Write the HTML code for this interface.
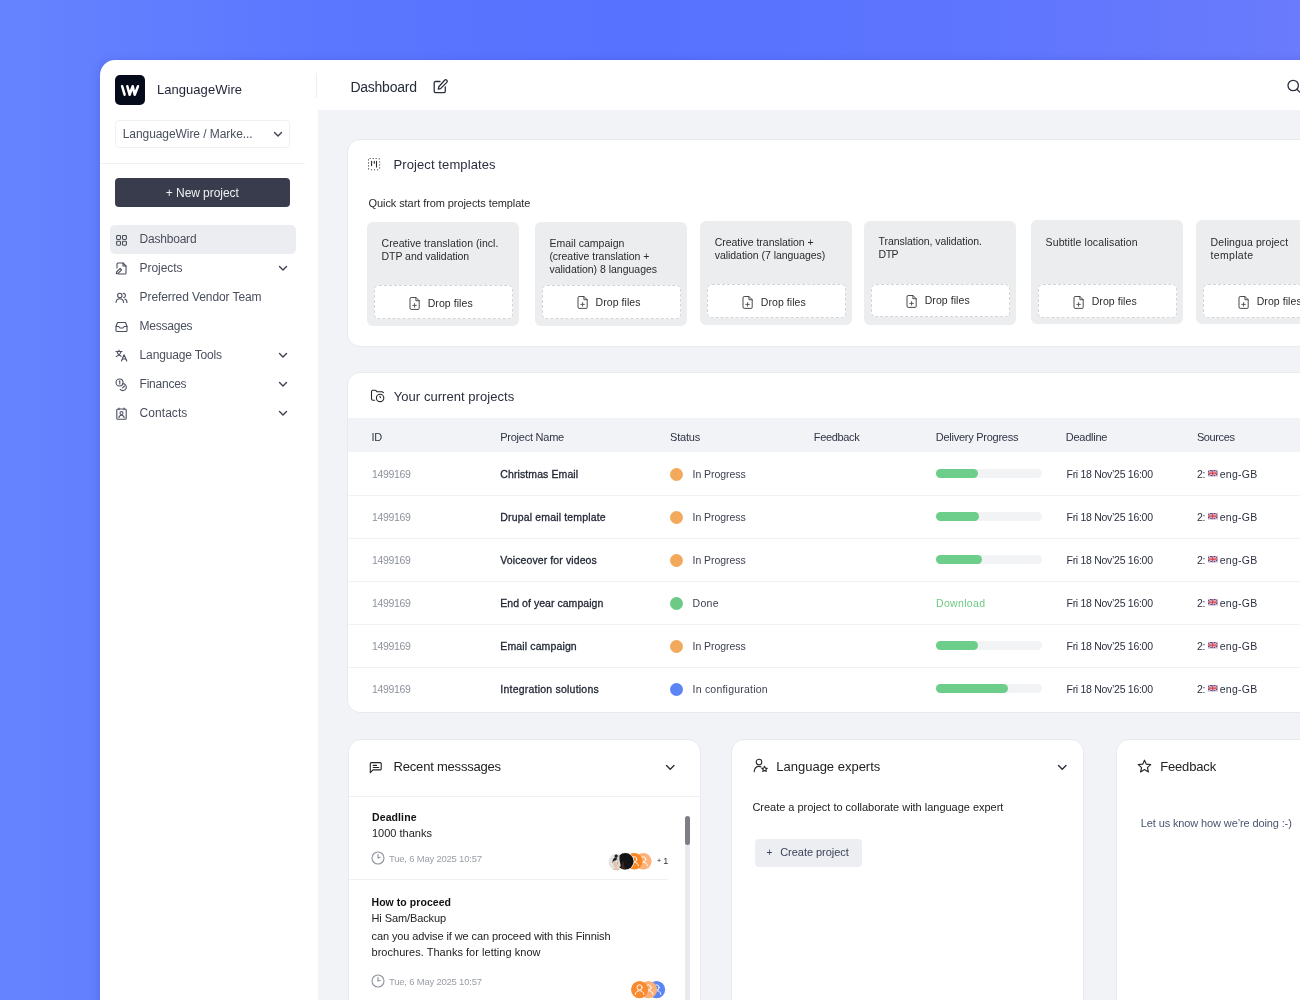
<!DOCTYPE html>
<html><head><meta charset="utf-8"><title>Dashboard</title>
<style>
html,body{margin:0;padding:0;width:1300px;height:1000px;overflow:hidden;}
body{position:relative;font-family:"Liberation Sans", sans-serif;background:linear-gradient(90deg,#6683ff 0%,#5b77ff 25%,#5672ff 48%,#5e75fe 75%,#6a7bfc 100%);}
.t{position:absolute;white-space:pre;}
#txt{position:absolute;left:0;top:0;width:1300px;height:1000px;will-change:transform;}
svg{position:absolute;overflow:visible;}
</style></head><body>
<div style="position:absolute;left:100px;top:60px;width:1250px;height:1000px;background:#fff;border-top-left-radius:15px;box-shadow:-2px 0 8px rgba(30,40,140,0.16);"></div>
<div style="position:absolute;left:318px;top:110px;width:1000px;height:900px;background:#f2f3f6;"></div>
<div style="position:absolute;left:316px;top:73px;width:1px;height:25px;background:#eceef1;"></div>
<div style="position:absolute;left:115px;top:75px;width:30px;height:30px;background:#060b1c;border-radius:5px;"></div>
<svg style="left:117px;top:80px" width="26" height="20" viewBox="0 0 26 20"><g fill="none" stroke="#fff" stroke-width="2.5" stroke-linecap="round" stroke-linejoin="round"><path d="M5.1 6.2 L7.6 14.7"/><path d="M10.3 6.2 L12.6 14.7 L15.7 6.2 L17.7 14.7 L21 6.2"/></g></svg>
<div style="position:absolute;left:115px;top:120px;width:175px;height:28px;box-sizing:border-box;border:1px solid #eff0f3;border-radius:4px;"></div>
<svg style="left:274.0px;top:132.3px" width="8" height="4.4" viewBox="0 0 8 4.4"><path d="M0.5 0.5 L4.0 3.9000000000000004 L7.5 0.5" fill="none" stroke="#3a3f4e" stroke-width="1.4" stroke-linecap="round" stroke-linejoin="round"/></svg>
<div style="position:absolute;left:100px;top:163px;width:205px;height:1px;background:#f0f1f3;"></div>
<div style="position:absolute;left:115px;top:178px;width:175px;height:29px;background:#393c4c;border-radius:4px;"></div>
<div style="position:absolute;left:110px;top:225px;width:186px;height:29px;background:#ecedf0;border-radius:5px;"></div>
<svg style="left:279.0px;top:266.0px" width="8" height="4.4" viewBox="0 0 8 4.4"><path d="M0.5 0.5 L4.0 3.9000000000000004 L7.5 0.5" fill="none" stroke="#3a3f4e" stroke-width="1.4" stroke-linecap="round" stroke-linejoin="round"/></svg>
<svg style="left:279.0px;top:353.0px" width="8" height="4.4" viewBox="0 0 8 4.4"><path d="M0.5 0.5 L4.0 3.9000000000000004 L7.5 0.5" fill="none" stroke="#3a3f4e" stroke-width="1.4" stroke-linecap="round" stroke-linejoin="round"/></svg>
<svg style="left:279.0px;top:382.0px" width="8" height="4.4" viewBox="0 0 8 4.4"><path d="M0.5 0.5 L4.0 3.9000000000000004 L7.5 0.5" fill="none" stroke="#3a3f4e" stroke-width="1.4" stroke-linecap="round" stroke-linejoin="round"/></svg>
<svg style="left:279.0px;top:411.0px" width="8" height="4.4" viewBox="0 0 8 4.4"><path d="M0.5 0.5 L4.0 3.9000000000000004 L7.5 0.5" fill="none" stroke="#3a3f4e" stroke-width="1.4" stroke-linecap="round" stroke-linejoin="round"/></svg>
<svg style="left:115px;top:233.5px" width="13" height="13" viewBox="0 0 13 13"><g fill="none" stroke="#4a4f5e" stroke-width="1.1" stroke-linecap="round" stroke-linejoin="round"><rect x="1.6" y="1.55" width="3.9" height="3.9" rx="0.9"/><rect x="7.5" y="1.55" width="3.9" height="3.9" rx="0.9"/><rect x="1.6" y="7.3" width="3.9" height="3.9" rx="0.9"/><rect x="7.5" y="7.3" width="3.9" height="3.9" rx="0.9"/></g></svg>
<svg style="left:115px;top:262px" width="13" height="13" viewBox="0 0 13 13"><g fill="none" stroke="#4a4f5e" stroke-width="1.1" stroke-linecap="round" stroke-linejoin="round"><path d="M3.5 12 H10 a1 1 0 0 0 1-1 V4 L8 1 H3 a1 1 0 0 0 -1 1 V6"/><path d="M8 1 V4 H11"/><path d="M1.3 11.8 L1.6 10 L5.2 6.4 L6.6 7.8 L3 11.4 Z"/></g></svg>
<svg style="left:115px;top:291px" width="13" height="13" viewBox="0 0 13 13"><g fill="none" stroke="#4a4f5e" stroke-width="1.1" stroke-linecap="round" stroke-linejoin="round"><circle cx="4.8" cy="4.5" r="2.2"/><path d="M1 11.5 C1.3 8.8 2.8 7.8 4.8 7.8 C6.8 7.8 8.3 8.8 8.6 11.5"/><path d="M8.3 2.4 C9.8 2.6 10.6 3.5 10.4 4.8 C10.2 5.8 9.4 6.4 8.6 6.5"/><path d="M9.8 8 C11.2 8.4 11.9 9.6 12 11.5"/></g></svg>
<svg style="left:115px;top:320px" width="13" height="13" viewBox="0 0 13 13"><g fill="none" stroke="#4a4f5e" stroke-width="1.1" stroke-linecap="round" stroke-linejoin="round"><path d="M1 6.5 L2.5 2.5 H10.5 L12 6.5 V10.5 a1 1 0 0 1 -1 1 H2 a1 1 0 0 1 -1 -1 Z"/><path d="M1 6.5 H3.8 L5 8 H8 L9.2 6.5 H12"/></g></svg>
<svg style="left:115px;top:349px" width="13" height="13" viewBox="0 0 13 13"><g fill="none" stroke="#4a4f5e" stroke-width="1.1" stroke-linecap="round" stroke-linejoin="round"><path d="M1 2.5 H7"/><path d="M4 1 V2.5"/><path d="M2 2.5 C2.5 5 4 6.5 6.2 7.3"/><path d="M6 2.5 C5.5 4.8 4 6.5 1.2 7.6"/><path d="M6.5 12 L9 5.8 L11.8 12"/><path d="M7.4 10 H10.9"/></g></svg>
<svg style="left:115px;top:378px" width="13" height="13" viewBox="0 0 13 13"><g fill="none" stroke="#4a4f5e" stroke-width="1.1" stroke-linecap="round" stroke-linejoin="round"><circle cx="4.5" cy="4.5" r="3.5"/><path d="M4.2 3.3 L4.8 3 V6"/><path d="M7.8 5.6 a3.5 3.5 0 1 1 -2.6 5.8"/><path d="M7.5 9.8 L9.5 8"/></g></svg>
<svg style="left:115px;top:407px" width="13" height="13" viewBox="0 0 13 13"><g fill="none" stroke="#4a4f5e" stroke-width="1.1" stroke-linecap="round" stroke-linejoin="round"><rect x="1.8" y="2" width="9.4" height="10.2" rx="1"/><path d="M4 1 V2.8 M9 1 V2.8"/><circle cx="6.5" cy="6" r="1.5"/><path d="M3.9 10.6 C4.2 8.9 5.2 8.3 6.5 8.3 C7.8 8.3 8.8 8.9 9.1 10.6"/></g></svg>
<svg style="left:433px;top:79px" width="15" height="15" viewBox="0 0 15 15"><g fill="none" stroke="#2a2f3e" stroke-width="1.3" stroke-linecap="round" stroke-linejoin="round"><path d="M7 2.5 H2.5 a1.3 1.3 0 0 0 -1.3 1.3 V12.3 a1.3 1.3 0 0 0 1.3 1.3 H11 a1.3 1.3 0 0 0 1.3 -1.3 V8"/><path d="M11.6 1.2 a1.5 1.5 0 0 1 2.2 2.2 L7.6 9.6 L5.3 10.1 L5.8 7.8 Z"/></g></svg>
<svg style="left:1286px;top:79px" width="20" height="20" viewBox="0 0 20 20"><g fill="none" stroke="#2a2f3e" stroke-width="1.3" stroke-linecap="round"><circle cx="7.2" cy="6.5" r="5.2"/><path d="M11 10.3 L14 13.3"/></g></svg>
<div style="position:absolute;left:347px;top:139px;width:1000px;height:208px;box-sizing:border-box;background:#fff;border:1px solid #e9eaee;border-radius:13px;"></div>
<svg style="left:366px;top:156px" width="16" height="16" viewBox="0 0 16 16"><g fill="none" stroke="#2b2b2b" stroke-width="1.1" stroke-linecap="round"><rect x="2.5" y="2.5" width="11.2" height="11.2" rx="1.6" stroke-dasharray="0.1 2.9"/><path d="M5.6 5.2 V9.6 M8.3 5.2 V7.2 M10.5 5.2 V10.9"/></g></svg>
<div style="position:absolute;left:367.2px;top:221.8px;width:152px;height:104px;background:#ecedef;border-radius:6px;"></div>
<div style="position:absolute;left:374.2px;top:285.4px;width:138.5px;height:33.60000000000002px;box-sizing:border-box;background:#fff;border:1px dashed #d3d5da;border-radius:5px;"></div>
<svg style="left:408.7px;top:295.7px" width="12" height="14" viewBox="0 0 12 14"><g fill="none" stroke="#4a4a4a" stroke-width="1" stroke-linejoin="round" stroke-linecap="round"><path d="M1 2.6 a1.1 1.1 0 0 1 1.1 -1.1 H7 L10.2 4.7 V12.3 a1.1 1.1 0 0 1 -1.1 1.1 H2.1 a1.1 1.1 0 0 1 -1.1 -1.1 Z"/><path d="M6.9 1.5 V4.7 H10.2"/><path d="M5.6 7.6 V11.2 M3.8 9.4 H7.4" stroke-width="0.9"/></g></svg>
<div style="position:absolute;left:535.0px;top:222.1px;width:152px;height:104px;background:#ecedef;border-radius:6px;"></div>
<div style="position:absolute;left:542.0px;top:285.1px;width:138.5px;height:33.5px;box-sizing:border-box;background:#fff;border:1px dashed #d3d5da;border-radius:5px;"></div>
<svg style="left:576.5px;top:295.35px" width="12" height="14" viewBox="0 0 12 14"><g fill="none" stroke="#4a4a4a" stroke-width="1" stroke-linejoin="round" stroke-linecap="round"><path d="M1 2.6 a1.1 1.1 0 0 1 1.1 -1.1 H7 L10.2 4.7 V12.3 a1.1 1.1 0 0 1 -1.1 1.1 H2.1 a1.1 1.1 0 0 1 -1.1 -1.1 Z"/><path d="M6.9 1.5 V4.7 H10.2"/><path d="M5.6 7.6 V11.2 M3.8 9.4 H7.4" stroke-width="0.9"/></g></svg>
<div style="position:absolute;left:700.3px;top:221.0px;width:152px;height:104px;background:#ecedef;border-radius:6px;"></div>
<div style="position:absolute;left:707.3px;top:284.3px;width:138.5px;height:33.69999999999999px;box-sizing:border-box;background:#fff;border:1px dashed #d3d5da;border-radius:5px;"></div>
<svg style="left:741.8px;top:294.65px" width="12" height="14" viewBox="0 0 12 14"><g fill="none" stroke="#4a4a4a" stroke-width="1" stroke-linejoin="round" stroke-linecap="round"><path d="M1 2.6 a1.1 1.1 0 0 1 1.1 -1.1 H7 L10.2 4.7 V12.3 a1.1 1.1 0 0 1 -1.1 1.1 H2.1 a1.1 1.1 0 0 1 -1.1 -1.1 Z"/><path d="M6.9 1.5 V4.7 H10.2"/><path d="M5.6 7.6 V11.2 M3.8 9.4 H7.4" stroke-width="0.9"/></g></svg>
<div style="position:absolute;left:864.2px;top:221.0px;width:152px;height:104px;background:#ecedef;border-radius:6px;"></div>
<div style="position:absolute;left:871.2px;top:283.5px;width:138.5px;height:33.10000000000002px;box-sizing:border-box;background:#fff;border:1px dashed #d3d5da;border-radius:5px;"></div>
<svg style="left:905.7px;top:293.55px" width="12" height="14" viewBox="0 0 12 14"><g fill="none" stroke="#4a4a4a" stroke-width="1" stroke-linejoin="round" stroke-linecap="round"><path d="M1 2.6 a1.1 1.1 0 0 1 1.1 -1.1 H7 L10.2 4.7 V12.3 a1.1 1.1 0 0 1 -1.1 1.1 H2.1 a1.1 1.1 0 0 1 -1.1 -1.1 Z"/><path d="M6.9 1.5 V4.7 H10.2"/><path d="M5.6 7.6 V11.2 M3.8 9.4 H7.4" stroke-width="0.9"/></g></svg>
<div style="position:absolute;left:1031.2px;top:220.3px;width:152px;height:104px;background:#ecedef;border-radius:6px;"></div>
<div style="position:absolute;left:1038.2px;top:284.3px;width:138.5px;height:33.39999999999998px;box-sizing:border-box;background:#fff;border:1px dashed #d3d5da;border-radius:5px;"></div>
<svg style="left:1072.7px;top:294.5px" width="12" height="14" viewBox="0 0 12 14"><g fill="none" stroke="#4a4a4a" stroke-width="1" stroke-linejoin="round" stroke-linecap="round"><path d="M1 2.6 a1.1 1.1 0 0 1 1.1 -1.1 H7 L10.2 4.7 V12.3 a1.1 1.1 0 0 1 -1.1 1.1 H2.1 a1.1 1.1 0 0 1 -1.1 -1.1 Z"/><path d="M6.9 1.5 V4.7 H10.2"/><path d="M5.6 7.6 V11.2 M3.8 9.4 H7.4" stroke-width="0.9"/></g></svg>
<div style="position:absolute;left:1196.2px;top:220.3px;width:152px;height:104px;background:#ecedef;border-radius:6px;"></div>
<div style="position:absolute;left:1203.2px;top:284.3px;width:138.5px;height:33.39999999999998px;box-sizing:border-box;background:#fff;border:1px dashed #d3d5da;border-radius:5px;"></div>
<svg style="left:1237.7px;top:294.5px" width="12" height="14" viewBox="0 0 12 14"><g fill="none" stroke="#4a4a4a" stroke-width="1" stroke-linejoin="round" stroke-linecap="round"><path d="M1 2.6 a1.1 1.1 0 0 1 1.1 -1.1 H7 L10.2 4.7 V12.3 a1.1 1.1 0 0 1 -1.1 1.1 H2.1 a1.1 1.1 0 0 1 -1.1 -1.1 Z"/><path d="M6.9 1.5 V4.7 H10.2"/><path d="M5.6 7.6 V11.2 M3.8 9.4 H7.4" stroke-width="0.9"/></g></svg>
<div style="position:absolute;left:347px;top:372px;width:1000px;height:341px;box-sizing:border-box;background:#fff;border:1px solid #e9eaee;border-radius:13px;"></div>
<svg style="left:366px;top:385px" width="24" height="22" viewBox="0 0 24 22"><g fill="none" stroke="#262626" stroke-width="1.1" stroke-linecap="round" stroke-linejoin="round"><path d="M8.6 15.2 H7 a1.5 1.5 0 0 1 -1.5 -1.5 V6.8 a1.5 1.5 0 0 1 1.5 -1.5 H9.2 a1 1 0 0 1 0.8 0.4 L10.8 6.7 H16.2 L17.4 7.6"/><circle cx="14.1" cy="12.9" r="3.7"/><path d="M13.9 11.3 L14.4 12.6"/></g></svg>
<div style="position:absolute;left:348px;top:418px;width:1000px;height:34px;background:#f2f3f6;"></div>
<div style="position:absolute;left:670px;top:468.0px;width:13px;height:13px;background:#f2a95c;border-radius:50%;"></div>
<div style="position:absolute;left:935.7px;top:469.0px;width:106.6px;height:8.7px;background:#f2f3f5;border-radius:5px;"></div>
<div style="position:absolute;left:935.7px;top:469.0px;width:42.3px;height:8.7px;background:#6dcd8a;border-radius:5px;"></div>
<svg style="left:1207.7px;top:469.8px" width="9.5" height="6.2" viewBox="0 0 60 40"><rect width="60" height="40" fill="#283a8e"/><path d="M0 0 L60 40 M60 0 L0 40" stroke="#fff" stroke-width="8"/><path d="M0 0 L60 40 M60 0 L0 40" stroke="#d22f3c" stroke-width="3"/><path d="M30 0 V40 M0 20 H60" stroke="#fff" stroke-width="12"/><path d="M30 0 V40 M0 20 H60" stroke="#d22f3c" stroke-width="7"/></svg>
<div style="position:absolute;left:348px;top:494.5px;width:1000px;height:1px;background:#f0f1f3;"></div>
<div style="position:absolute;left:670px;top:511.00000000000006px;width:13px;height:13px;background:#f2a95c;border-radius:50%;"></div>
<div style="position:absolute;left:935.7px;top:512.0px;width:106.6px;height:8.7px;background:#f2f3f5;border-radius:5px;"></div>
<div style="position:absolute;left:935.7px;top:512.0px;width:43.5px;height:8.7px;background:#6dcd8a;border-radius:5px;"></div>
<svg style="left:1207.7px;top:512.8000000000001px" width="9.5" height="6.2" viewBox="0 0 60 40"><rect width="60" height="40" fill="#283a8e"/><path d="M0 0 L60 40 M60 0 L0 40" stroke="#fff" stroke-width="8"/><path d="M0 0 L60 40 M60 0 L0 40" stroke="#d22f3c" stroke-width="3"/><path d="M30 0 V40 M0 20 H60" stroke="#fff" stroke-width="12"/><path d="M30 0 V40 M0 20 H60" stroke="#d22f3c" stroke-width="7"/></svg>
<div style="position:absolute;left:348px;top:537.5px;width:1000px;height:1px;background:#f0f1f3;"></div>
<div style="position:absolute;left:670px;top:554.0px;width:13px;height:13px;background:#f2a95c;border-radius:50%;"></div>
<div style="position:absolute;left:935.7px;top:555.0px;width:106.6px;height:8.7px;background:#f2f3f5;border-radius:5px;"></div>
<div style="position:absolute;left:935.7px;top:555.0px;width:46px;height:8.7px;background:#6dcd8a;border-radius:5px;"></div>
<svg style="left:1207.7px;top:555.8000000000001px" width="9.5" height="6.2" viewBox="0 0 60 40"><rect width="60" height="40" fill="#283a8e"/><path d="M0 0 L60 40 M60 0 L0 40" stroke="#fff" stroke-width="8"/><path d="M0 0 L60 40 M60 0 L0 40" stroke="#d22f3c" stroke-width="3"/><path d="M30 0 V40 M0 20 H60" stroke="#fff" stroke-width="12"/><path d="M30 0 V40 M0 20 H60" stroke="#d22f3c" stroke-width="7"/></svg>
<div style="position:absolute;left:348px;top:580.5px;width:1000px;height:1px;background:#f0f1f3;"></div>
<div style="position:absolute;left:670px;top:597.0px;width:13px;height:13px;background:#6cca85;border-radius:50%;"></div>
<svg style="left:1207.7px;top:598.8000000000001px" width="9.5" height="6.2" viewBox="0 0 60 40"><rect width="60" height="40" fill="#283a8e"/><path d="M0 0 L60 40 M60 0 L0 40" stroke="#fff" stroke-width="8"/><path d="M0 0 L60 40 M60 0 L0 40" stroke="#d22f3c" stroke-width="3"/><path d="M30 0 V40 M0 20 H60" stroke="#fff" stroke-width="12"/><path d="M30 0 V40 M0 20 H60" stroke="#d22f3c" stroke-width="7"/></svg>
<div style="position:absolute;left:348px;top:623.5px;width:1000px;height:1px;background:#f0f1f3;"></div>
<div style="position:absolute;left:670px;top:640.0px;width:13px;height:13px;background:#f2a95c;border-radius:50%;"></div>
<div style="position:absolute;left:935.7px;top:641.0px;width:106.6px;height:8.7px;background:#f2f3f5;border-radius:5px;"></div>
<div style="position:absolute;left:935.7px;top:641.0px;width:42.3px;height:8.7px;background:#6dcd8a;border-radius:5px;"></div>
<svg style="left:1207.7px;top:641.8000000000001px" width="9.5" height="6.2" viewBox="0 0 60 40"><rect width="60" height="40" fill="#283a8e"/><path d="M0 0 L60 40 M60 0 L0 40" stroke="#fff" stroke-width="8"/><path d="M0 0 L60 40 M60 0 L0 40" stroke="#d22f3c" stroke-width="3"/><path d="M30 0 V40 M0 20 H60" stroke="#fff" stroke-width="12"/><path d="M30 0 V40 M0 20 H60" stroke="#d22f3c" stroke-width="7"/></svg>
<div style="position:absolute;left:348px;top:666.5px;width:1000px;height:1px;background:#f0f1f3;"></div>
<div style="position:absolute;left:670px;top:683.0px;width:13px;height:13px;background:#5b84f5;border-radius:50%;"></div>
<div style="position:absolute;left:935.7px;top:684.0px;width:106.6px;height:8.7px;background:#f2f3f5;border-radius:5px;"></div>
<div style="position:absolute;left:935.7px;top:684.0px;width:72px;height:8.7px;background:#6dcd8a;border-radius:5px;"></div>
<svg style="left:1207.7px;top:684.8000000000001px" width="9.5" height="6.2" viewBox="0 0 60 40"><rect width="60" height="40" fill="#283a8e"/><path d="M0 0 L60 40 M60 0 L0 40" stroke="#fff" stroke-width="8"/><path d="M0 0 L60 40 M60 0 L0 40" stroke="#d22f3c" stroke-width="3"/><path d="M30 0 V40 M0 20 H60" stroke="#fff" stroke-width="12"/><path d="M30 0 V40 M0 20 H60" stroke="#d22f3c" stroke-width="7"/></svg>
<div style="position:absolute;left:348px;top:739px;width:353px;height:300px;box-sizing:border-box;background:#fff;border:1px solid #e9eaee;border-radius:13px;"></div>
<svg style="left:368.5px;top:761px" width="14" height="13" viewBox="0 0 14 13"><g fill="none" stroke="#222" stroke-width="1.1" stroke-linecap="round" stroke-linejoin="round"><path d="M1.3 11.6 V2.6 a1 1 0 0 1 1 -1 H11.3 a0.9 0.9 0 0 1 0.9 0.9 V8 a0.9 0.9 0 0 1 -0.9 0.9 H4 Z"/><path d="M4.2 4.4 H7.5 M4.2 6.5 H9.8"/></g></svg>
<svg style="left:665.75px;top:765.1625px" width="8.5" height="4.675000000000001" viewBox="0 0 8.5 4.675000000000001"><path d="M0.5 0.5 L4.25 4.175000000000001 L8.0 0.5" fill="none" stroke="#2a2f3e" stroke-width="1.4" stroke-linecap="round" stroke-linejoin="round"/></svg>
<div style="position:absolute;left:349px;top:796px;width:352px;height:1px;background:#eff0f2;"></div>
<div style="position:absolute;left:685px;top:816px;width:4.6px;height:200px;background:#e9eaed;border-radius:3px;"></div>
<div style="position:absolute;left:685px;top:816px;width:4.6px;height:29px;background:#7d7f84;border-radius:3px;"></div>
<svg style="left:370.6px;top:851.4px" width="14" height="14" viewBox="0 0 14 14"><g fill="none" stroke="#8e939d" stroke-width="1.1" stroke-linecap="round"><circle cx="7" cy="7" r="6"/><path d="M7 3.4 V7 L9.2 6.2"/></g></svg>
<svg style="left:608.2px;top:852.5px" width="18" height="18" viewBox="0 0 18 18"><circle cx="9" cy="9" r="8.5" fill="#e4e4e4"/><ellipse cx="8.2" cy="10.9" rx="2.8" ry="3.6" fill="#e6c3a8"/><path d="M4.6 10.2 C4.2 6.2 5.8 4.4 8.2 4.4 C10.6 4.4 12.2 6.2 11.8 10.2 C11.3 8 9.9 7.2 8.2 7.2 C6.5 7.2 5.1 8 4.6 10.2Z" fill="#1b1b1b"/><circle cx="8.2" cy="3.1" r="1.7" fill="#1b1b1b"/><path d="M4.8 17 C5.3 15.4 6.8 14.8 8.2 14.8 C9.6 14.8 11.1 15.4 11.6 17" fill="#e6c3a8"/></svg>
<svg style="left:635.3000000000001px;top:853.2px" width="16.6" height="16.6" viewBox="0 0 20 20"><circle cx="10" cy="10" r="10" fill="#fdb27a"/><g fill="none" stroke="#fff" stroke-width="1.1" stroke-linecap="round"><circle cx="10" cy="7.5" r="3"/><path d="M5 15.5 C5.5 12.5 7.5 11.3 10 11.3 C12.5 11.3 14.5 12.5 15 15.5"/></g></svg>
<svg style="left:626.4000000000001px;top:853.2px" width="16.6" height="16.6" viewBox="0 0 20 20"><circle cx="10" cy="10" r="10" fill="#fa8624"/><g fill="none" stroke="#fff" stroke-width="1.1" stroke-linecap="round"><circle cx="10" cy="7.5" r="3"/><path d="M5 15.5 C5.5 12.5 7.5 11.3 10 11.3 C12.5 11.3 14.5 12.5 15 15.5"/></g></svg>
<svg style="left:616.2px;top:852.2px" width="18.6" height="18.6" viewBox="0 0 18.6 18.6"><circle cx="9.3" cy="9.3" r="9.0" fill="#f4f4f4"/><circle cx="9.3" cy="9.3" r="8.3" fill="#141414"/><path d="M1 9.3 A8.3 8.3 0 0 1 3.6 3.3 C3.2 6 3.6 9 4.4 12 C4.8 13.6 4.6 14.8 3.8 15.3 A8.3 8.3 0 0 1 1 9.3Z" fill="#dcdcdc"/><path d="M5.2 16.5 C5.6 13 6 10.5 7.2 8.6 C7.6 11.5 8.2 14.5 9.2 17.6 C7.6 17.5 6.3 17.1 5.2 16.5Z" fill="#3d271c"/></svg>
<div style="position:absolute;left:349px;top:878.5px;width:319px;height:1px;background:#eff0f2;"></div>
<svg style="left:370.6px;top:973.9px" width="14" height="14" viewBox="0 0 14 14"><g fill="none" stroke="#8e939d" stroke-width="1.1" stroke-linecap="round"><circle cx="7" cy="7" r="6"/><path d="M7 3.4 V7 L9.2 6.2"/></g></svg>
<svg style="left:648.4px;top:980.9px" width="17.2" height="17.2" viewBox="0 0 20 20"><circle cx="10" cy="10" r="10" fill="#5b84f5"/><g fill="none" stroke="#fff" stroke-width="1.1" stroke-linecap="round"><circle cx="10" cy="7.5" r="3"/><path d="M5 15.5 C5.5 12.5 7.5 11.3 10 11.3 C12.5 11.3 14.5 12.5 15 15.5"/></g></svg>
<svg style="left:639.9px;top:980.9px" width="17.2" height="17.2" viewBox="0 0 20 20"><circle cx="10" cy="10" r="10" fill="#fbb07a"/><g fill="none" stroke="#fff" stroke-width="1.1" stroke-linecap="round"><circle cx="10" cy="7.5" r="3"/><path d="M5 15.5 C5.5 12.5 7.5 11.3 10 11.3 C12.5 11.3 14.5 12.5 15 15.5"/></g></svg>
<svg style="left:631.4px;top:980.9px" width="17.2" height="17.2" viewBox="0 0 20 20"><circle cx="10" cy="10" r="10" fill="#f98a2f"/><g fill="none" stroke="#fff" stroke-width="1.1" stroke-linecap="round"><circle cx="10" cy="7.5" r="3"/><path d="M5 15.5 C5.5 12.5 7.5 11.3 10 11.3 C12.5 11.3 14.5 12.5 15 15.5"/></g></svg>
<div style="position:absolute;left:731px;top:739px;width:353px;height:300px;box-sizing:border-box;background:#fff;border:1px solid #e9eaee;border-radius:13px;"></div>
<svg style="left:753px;top:758px" width="16" height="15" viewBox="0 0 16 15"><g fill="none" stroke="#2a2a2a" stroke-width="1.1" stroke-linecap="round" stroke-linejoin="round"><circle cx="6" cy="4" r="2.8"/><path d="M1.2 13.6 C1.5 10.2 3.4 8.4 6 8.4 C6.8 8.4 7.5 8.6 8.1 8.9"/><path d="M11.5 8.3 L12.4 10.1 L14.3 10.3 L12.9 11.6 L13.3 13.5 L11.5 12.5 L9.8 13.5 L10.2 11.6 L8.8 10.3 L10.7 10.1 Z"/></g></svg>
<svg style="left:1058.25px;top:765.1625px" width="8.5" height="4.675000000000001" viewBox="0 0 8.5 4.675000000000001"><path d="M0.5 0.5 L4.25 4.175000000000001 L8.0 0.5" fill="none" stroke="#2a2f3e" stroke-width="1.4" stroke-linecap="round" stroke-linejoin="round"/></svg>
<div style="position:absolute;left:754.5px;top:838.7px;width:107.3px;height:28.5px;background:#eceef1;border-radius:4px;"></div>
<div style="position:absolute;left:1116px;top:739px;width:300px;height:300px;box-sizing:border-box;background:#fff;border:1px solid #e9eaee;border-radius:13px;"></div>
<svg style="left:1137px;top:759px" width="15" height="15" viewBox="0 0 15 15"><path d="M7.5 1.2 L9.3 5.2 L13.7 5.6 L10.4 8.6 L11.4 12.9 L7.5 10.6 L3.6 12.9 L4.6 8.6 L1.3 5.6 L5.7 5.2 Z" fill="none" stroke="#2a2a2a" stroke-width="1.2" stroke-linejoin="round"/></svg>
<div id="txt">
<div class="t" style="left:157.00px;top:81.50px;font-size:13.00px;line-height:15.60px;letter-spacing:0.040px;font-weight:400;color:#1e2235;">LanguageWire</div>
<div class="t" style="left:122.70px;top:126.84px;font-size:12.00px;line-height:14.40px;letter-spacing:-0.064px;font-weight:400;color:#4a4f5e;">LanguageWire / Marke...</div>
<div class="t" style="left:165.80px;top:185.54px;font-size:12.00px;line-height:14.40px;letter-spacing:-0.059px;font-weight:400;color:#eef0f3;">+ New project</div>
<div class="t" style="left:139.60px;top:231.84px;font-size:12.00px;line-height:14.40px;letter-spacing:-0.215px;font-weight:400;color:#4a4f5e;">Dashboard</div>
<div class="t" style="left:139.60px;top:260.84px;font-size:12.00px;line-height:14.40px;letter-spacing:-0.051px;font-weight:400;color:#4a4f5e;">Projects</div>
<div class="t" style="left:139.60px;top:289.84px;font-size:12.00px;line-height:14.40px;letter-spacing:-0.093px;font-weight:400;color:#4a4f5e;">Preferred Vendor Team</div>
<div class="t" style="left:139.60px;top:318.84px;font-size:12.00px;line-height:14.40px;letter-spacing:-0.243px;font-weight:400;color:#4a4f5e;">Messages</div>
<div class="t" style="left:139.60px;top:347.84px;font-size:12.00px;line-height:14.40px;letter-spacing:-0.156px;font-weight:400;color:#4a4f5e;">Language Tools</div>
<div class="t" style="left:139.60px;top:376.84px;font-size:12.00px;line-height:14.40px;letter-spacing:-0.243px;font-weight:400;color:#4a4f5e;">Finances</div>
<div class="t" style="left:139.60px;top:405.84px;font-size:12.00px;line-height:14.40px;letter-spacing:0.049px;font-weight:400;color:#4a4f5e;">Contacts</div>
<div class="t" style="left:350.40px;top:78.75px;font-size:14.00px;line-height:16.80px;letter-spacing:-0.238px;font-weight:400;color:#272c3c;">Dashboard</div>
<div class="t" style="left:393.50px;top:156.70px;font-size:13.00px;line-height:15.60px;letter-spacing:0.098px;font-weight:400;color:#2a2f3e;">Project templates</div>
<div class="t" style="left:368.50px;top:197.19px;font-size:11.00px;line-height:13.20px;letter-spacing:-0.080px;font-weight:400;color:#2a2a2a;">Quick start from projects template</div>
<div class="t" style="left:381.60px;top:237.36px;font-size:10.50px;line-height:12.60px;letter-spacing:0.048px;font-weight:400;color:#2b2b2b;">Creative translation (incl.</div>
<div class="t" style="left:381.60px;top:250.36px;font-size:10.50px;line-height:12.60px;letter-spacing:-0.055px;font-weight:400;color:#2b2b2b;">DTP and validation</div>
<div class="t" style="left:427.70px;top:296.56px;font-size:10.50px;line-height:12.60px;letter-spacing:0.071px;font-weight:400;color:#2b2b2b;">Drop files</div>
<div class="t" style="left:549.40px;top:237.16px;font-size:10.50px;line-height:12.60px;letter-spacing:0.023px;font-weight:400;color:#2b2b2b;">Email campaign</div>
<div class="t" style="left:549.40px;top:250.16px;font-size:10.50px;line-height:12.60px;letter-spacing:-0.031px;font-weight:400;color:#2b2b2b;">(creative translation +</div>
<div class="t" style="left:549.40px;top:263.16px;font-size:10.50px;line-height:12.60px;letter-spacing:-0.014px;font-weight:400;color:#2b2b2b;">validation) 8 languages</div>
<div class="t" style="left:595.50px;top:296.21px;font-size:10.50px;line-height:12.60px;letter-spacing:0.071px;font-weight:400;color:#2b2b2b;">Drop files</div>
<div class="t" style="left:714.70px;top:236.16px;font-size:10.50px;line-height:12.60px;letter-spacing:-0.025px;font-weight:400;color:#2b2b2b;">Creative translation +</div>
<div class="t" style="left:714.70px;top:249.16px;font-size:10.50px;line-height:12.60px;letter-spacing:-0.039px;font-weight:400;color:#2b2b2b;">validation (7 languages)</div>
<div class="t" style="left:760.80px;top:295.51px;font-size:10.50px;line-height:12.60px;letter-spacing:0.071px;font-weight:400;color:#2b2b2b;">Drop files</div>
<div class="t" style="left:878.60px;top:234.56px;font-size:10.50px;line-height:12.60px;letter-spacing:-0.055px;font-weight:400;color:#2b2b2b;">Translation, validation.</div>
<div class="t" style="left:878.60px;top:247.56px;font-size:10.50px;line-height:12.60px;letter-spacing:-0.500px;font-weight:400;color:#2b2b2b;">DTP</div>
<div class="t" style="left:924.70px;top:294.41px;font-size:10.50px;line-height:12.60px;letter-spacing:0.071px;font-weight:400;color:#2b2b2b;">Drop files</div>
<div class="t" style="left:1045.60px;top:235.86px;font-size:10.50px;line-height:12.60px;letter-spacing:0.105px;font-weight:400;color:#2b2b2b;">Subtitle localisation</div>
<div class="t" style="left:1091.70px;top:295.36px;font-size:10.50px;line-height:12.60px;letter-spacing:0.071px;font-weight:400;color:#2b2b2b;">Drop files</div>
<div class="t" style="left:1210.60px;top:235.86px;font-size:10.50px;line-height:12.60px;letter-spacing:0.107px;font-weight:400;color:#2b2b2b;">Delingua project</div>
<div class="t" style="left:1210.60px;top:248.86px;font-size:10.50px;line-height:12.60px;letter-spacing:0.317px;font-weight:400;color:#2b2b2b;">template</div>
<div class="t" style="left:1256.70px;top:295.36px;font-size:10.50px;line-height:12.60px;letter-spacing:0.071px;font-weight:400;color:#2b2b2b;">Drop files</div>
<div class="t" style="left:393.80px;top:388.50px;font-size:13.00px;line-height:15.60px;letter-spacing:0.046px;font-weight:400;color:#2a2f3e;">Your current projects</div>
<div class="t" style="left:371.50px;top:430.79px;font-size:11.00px;line-height:13.20px;letter-spacing:-0.200px;font-weight:400;color:#2f3445;">ID</div>
<div class="t" style="left:500.20px;top:430.79px;font-size:11.00px;line-height:13.20px;letter-spacing:-0.240px;font-weight:400;color:#2f3445;">Project Name</div>
<div class="t" style="left:670.00px;top:430.79px;font-size:11.00px;line-height:13.20px;letter-spacing:-0.177px;font-weight:400;color:#2f3445;">Status</div>
<div class="t" style="left:813.80px;top:430.79px;font-size:11.00px;line-height:13.20px;letter-spacing:-0.330px;font-weight:400;color:#2f3445;">Feedback</div>
<div class="t" style="left:935.70px;top:430.79px;font-size:11.00px;line-height:13.20px;letter-spacing:-0.251px;font-weight:400;color:#2f3445;">Delivery Progress</div>
<div class="t" style="left:1065.80px;top:430.79px;font-size:11.00px;line-height:13.20px;letter-spacing:-0.260px;font-weight:400;color:#2f3445;">Deadline</div>
<div class="t" style="left:1196.90px;top:430.79px;font-size:11.00px;line-height:13.20px;letter-spacing:-0.377px;font-weight:400;color:#2f3445;">Sources</div>
<div class="t" style="left:372.00px;top:467.76px;font-size:10.50px;line-height:12.60px;letter-spacing:-0.348px;font-weight:400;color:#8d929c;">1499169</div>
<div class="t" style="left:500.30px;top:467.76px;font-size:10.50px;line-height:12.60px;letter-spacing:0.097px;font-weight:400;color:#1f2433;-webkit-text-stroke:0.3px #1f2433;">Christmas Email</div>
<div class="t" style="left:692.60px;top:467.76px;font-size:10.50px;line-height:12.60px;letter-spacing:-0.060px;font-weight:400;color:#3a3f4e;">In Progress</div>
<div class="t" style="left:1066.50px;top:467.76px;font-size:10.50px;line-height:12.60px;letter-spacing:-0.286px;font-weight:400;color:#2b3040;">Fri 18 Nov’25 16:00</div>
<div class="t" style="left:1197.00px;top:467.76px;font-size:10.50px;line-height:12.60px;letter-spacing:-0.266px;font-weight:400;color:#2b3040;">2:</div>
<div class="t" style="left:1219.70px;top:467.76px;font-size:10.50px;line-height:12.60px;letter-spacing:0.263px;font-weight:400;color:#2b3040;">eng-GB</div>
<div class="t" style="left:372.00px;top:510.76px;font-size:10.50px;line-height:12.60px;letter-spacing:-0.348px;font-weight:400;color:#8d929c;">1499169</div>
<div class="t" style="left:500.30px;top:510.76px;font-size:10.50px;line-height:12.60px;letter-spacing:0.158px;font-weight:400;color:#1f2433;-webkit-text-stroke:0.3px #1f2433;">Drupal email template</div>
<div class="t" style="left:692.60px;top:510.76px;font-size:10.50px;line-height:12.60px;letter-spacing:-0.060px;font-weight:400;color:#3a3f4e;">In Progress</div>
<div class="t" style="left:1066.50px;top:510.76px;font-size:10.50px;line-height:12.60px;letter-spacing:-0.286px;font-weight:400;color:#2b3040;">Fri 18 Nov’25 16:00</div>
<div class="t" style="left:1197.00px;top:510.76px;font-size:10.50px;line-height:12.60px;letter-spacing:-0.266px;font-weight:400;color:#2b3040;">2:</div>
<div class="t" style="left:1219.70px;top:510.76px;font-size:10.50px;line-height:12.60px;letter-spacing:0.263px;font-weight:400;color:#2b3040;">eng-GB</div>
<div class="t" style="left:372.00px;top:553.76px;font-size:10.50px;line-height:12.60px;letter-spacing:-0.348px;font-weight:400;color:#8d929c;">1499169</div>
<div class="t" style="left:500.30px;top:553.76px;font-size:10.50px;line-height:12.60px;letter-spacing:0.102px;font-weight:400;color:#1f2433;-webkit-text-stroke:0.3px #1f2433;">Voiceover for videos</div>
<div class="t" style="left:692.60px;top:553.76px;font-size:10.50px;line-height:12.60px;letter-spacing:-0.060px;font-weight:400;color:#3a3f4e;">In Progress</div>
<div class="t" style="left:1066.50px;top:553.76px;font-size:10.50px;line-height:12.60px;letter-spacing:-0.286px;font-weight:400;color:#2b3040;">Fri 18 Nov’25 16:00</div>
<div class="t" style="left:1197.00px;top:553.76px;font-size:10.50px;line-height:12.60px;letter-spacing:-0.266px;font-weight:400;color:#2b3040;">2:</div>
<div class="t" style="left:1219.70px;top:553.76px;font-size:10.50px;line-height:12.60px;letter-spacing:0.263px;font-weight:400;color:#2b3040;">eng-GB</div>
<div class="t" style="left:372.00px;top:596.76px;font-size:10.50px;line-height:12.60px;letter-spacing:-0.348px;font-weight:400;color:#8d929c;">1499169</div>
<div class="t" style="left:500.30px;top:596.76px;font-size:10.50px;line-height:12.60px;letter-spacing:0.044px;font-weight:400;color:#1f2433;-webkit-text-stroke:0.3px #1f2433;">End of year campaign</div>
<div class="t" style="left:692.60px;top:596.76px;font-size:10.50px;line-height:12.60px;letter-spacing:0.297px;font-weight:400;color:#3a3f4e;">Done</div>
<div class="t" style="left:936.00px;top:596.76px;font-size:10.50px;line-height:12.60px;letter-spacing:0.328px;font-weight:400;color:#6cca85;">Download</div>
<div class="t" style="left:1066.50px;top:596.76px;font-size:10.50px;line-height:12.60px;letter-spacing:-0.286px;font-weight:400;color:#2b3040;">Fri 18 Nov’25 16:00</div>
<div class="t" style="left:1197.00px;top:596.76px;font-size:10.50px;line-height:12.60px;letter-spacing:-0.266px;font-weight:400;color:#2b3040;">2:</div>
<div class="t" style="left:1219.70px;top:596.76px;font-size:10.50px;line-height:12.60px;letter-spacing:0.263px;font-weight:400;color:#2b3040;">eng-GB</div>
<div class="t" style="left:372.00px;top:639.76px;font-size:10.50px;line-height:12.60px;letter-spacing:-0.348px;font-weight:400;color:#8d929c;">1499169</div>
<div class="t" style="left:500.30px;top:639.76px;font-size:10.50px;line-height:12.60px;letter-spacing:0.131px;font-weight:400;color:#1f2433;-webkit-text-stroke:0.3px #1f2433;">Email campaign</div>
<div class="t" style="left:692.60px;top:639.76px;font-size:10.50px;line-height:12.60px;letter-spacing:-0.060px;font-weight:400;color:#3a3f4e;">In Progress</div>
<div class="t" style="left:1066.50px;top:639.76px;font-size:10.50px;line-height:12.60px;letter-spacing:-0.286px;font-weight:400;color:#2b3040;">Fri 18 Nov’25 16:00</div>
<div class="t" style="left:1197.00px;top:639.76px;font-size:10.50px;line-height:12.60px;letter-spacing:-0.266px;font-weight:400;color:#2b3040;">2:</div>
<div class="t" style="left:1219.70px;top:639.76px;font-size:10.50px;line-height:12.60px;letter-spacing:0.263px;font-weight:400;color:#2b3040;">eng-GB</div>
<div class="t" style="left:372.00px;top:682.76px;font-size:10.50px;line-height:12.60px;letter-spacing:-0.348px;font-weight:400;color:#8d929c;">1499169</div>
<div class="t" style="left:500.30px;top:682.76px;font-size:10.50px;line-height:12.60px;letter-spacing:0.221px;font-weight:400;color:#1f2433;-webkit-text-stroke:0.3px #1f2433;">Integration solutions</div>
<div class="t" style="left:692.60px;top:682.76px;font-size:10.50px;line-height:12.60px;letter-spacing:0.212px;font-weight:400;color:#3a3f4e;">In configuration</div>
<div class="t" style="left:1066.50px;top:682.76px;font-size:10.50px;line-height:12.60px;letter-spacing:-0.286px;font-weight:400;color:#2b3040;">Fri 18 Nov’25 16:00</div>
<div class="t" style="left:1197.00px;top:682.76px;font-size:10.50px;line-height:12.60px;letter-spacing:-0.266px;font-weight:400;color:#2b3040;">2:</div>
<div class="t" style="left:1219.70px;top:682.76px;font-size:10.50px;line-height:12.60px;letter-spacing:0.263px;font-weight:400;color:#2b3040;">eng-GB</div>
<div class="t" style="left:393.60px;top:758.80px;font-size:13.00px;line-height:15.60px;letter-spacing:-0.204px;font-weight:400;color:#222;">Recent messsages</div>
<div class="t" style="left:372.00px;top:810.66px;font-size:10.50px;line-height:12.60px;letter-spacing:0.105px;font-weight:700;color:#111;">Deadline</div>
<div class="t" style="left:372.00px;top:827.29px;font-size:11.00px;line-height:13.20px;letter-spacing:0.006px;font-weight:400;color:#222;">1000 thanks</div>
<div class="t" style="left:389.00px;top:853.01px;font-size:9.50px;line-height:11.40px;letter-spacing:-0.218px;font-weight:400;color:#9a9ea8;">Tue, 6 May 2025 10:57</div>
<div class="t" style="left:656.80px;top:855.93px;font-size:8.00px;line-height:9.60px;letter-spacing:-0.172px;font-weight:400;color:#333;">+</div>
<div class="t" style="left:663.20px;top:855.78px;font-size:9.00px;line-height:10.80px;letter-spacing:-1.016px;font-weight:400;color:#333;">1</div>
<div class="t" style="left:371.50px;top:896.36px;font-size:10.50px;line-height:12.60px;letter-spacing:0.056px;font-weight:700;color:#111;">How to proceed</div>
<div class="t" style="left:371.50px;top:912.39px;font-size:11.00px;line-height:13.20px;letter-spacing:-0.101px;font-weight:400;color:#222;">Hi Sam/Backup</div>
<div class="t" style="left:371.50px;top:929.59px;font-size:11.00px;line-height:13.20px;letter-spacing:-0.101px;font-weight:400;color:#222;">can you advise if we can proceed with this Finnish</div>
<div class="t" style="left:371.50px;top:945.69px;font-size:11.00px;line-height:13.20px;letter-spacing:0.032px;font-weight:400;color:#222;">brochures. Thanks for letting know</div>
<div class="t" style="left:389.00px;top:976.21px;font-size:9.50px;line-height:11.40px;letter-spacing:-0.218px;font-weight:400;color:#9a9ea8;">Tue, 6 May 2025 10:57</div>
<div class="t" style="left:776.30px;top:758.70px;font-size:13.00px;line-height:15.60px;letter-spacing:-0.006px;font-weight:400;color:#222;">Language experts</div>
<div class="t" style="left:752.40px;top:800.69px;font-size:11.00px;line-height:13.20px;letter-spacing:-0.018px;font-weight:400;color:#222;">Create a project to collaborate with language expert</div>
<div class="t" style="left:766.50px;top:846.53px;font-size:10.00px;line-height:12.00px;letter-spacing:0.156px;font-weight:400;color:#3b4358;">+</div>
<div class="t" style="left:780.20px;top:845.59px;font-size:11.00px;line-height:13.20px;letter-spacing:-0.038px;font-weight:400;color:#3b4358;">Create project</div>
<div class="t" style="left:1160.20px;top:758.70px;font-size:13.00px;line-height:15.60px;letter-spacing:-0.156px;font-weight:400;color:#222;">Feedback</div>
<div class="t" style="left:1140.80px;top:816.79px;font-size:11.00px;line-height:13.20px;letter-spacing:-0.123px;font-weight:400;color:#4b5470;">Let us know how we’re doing :-)</div>
</div>
</body></html>
